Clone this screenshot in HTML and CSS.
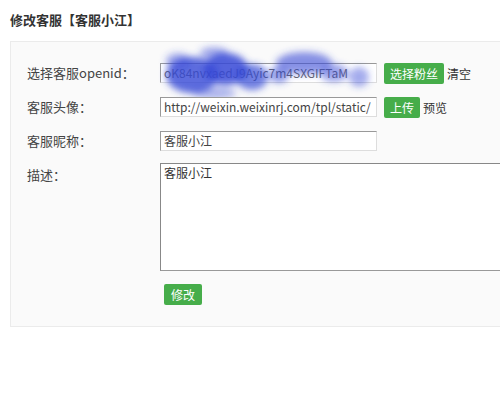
FILE: index.html
```html
<!DOCTYPE html>
<html lang="zh-CN">
<head>
    <meta charset="UTF-8">
    <title>修改客服</title>
    <link rel="stylesheet" href="styles.css">
</head>
<body>
    <h2 class="title">修改客服【客服小江】</h2>
    <div class="panel">
        <div class="row">
            <label class="lbl">选择客服openid：</label>
            <div class="field">
                <span class="inp inp-id">oK84nvxaedJ9Ayic7m4SXGIFTaM</span>
                <svg class="mask" width="230" height="64" viewBox="0 0 230 64">
                    <defs>
                        <filter id="bl" x="-30%" y="-60%" width="160%" height="220%">
                            <feGaussianBlur stdDeviation="3.5"/>
                        </filter>
                    </defs>
                    <g filter="url(#bl)" fill="#3548d6">
                        <ellipse cx="38" cy="34" rx="26" ry="18" opacity="0.8"/>
                        <ellipse cx="72" cy="28" rx="22" ry="16" opacity="0.85"/>
                        <ellipse cx="98" cy="36" rx="16" ry="13" opacity="0.7"/>
                        <ellipse cx="24" cy="20" rx="12" ry="8" opacity="0.45"/>
                        <ellipse cx="60" cy="12" rx="14" ry="6" opacity="0.45"/>
                        <ellipse cx="150" cy="22" rx="28" ry="11" opacity="0.6"/>
                        <ellipse cx="180" cy="32" rx="14" ry="9" opacity="0.5"/>
                        <ellipse cx="205" cy="36" rx="10" ry="10" opacity="0.45"/>
                        <ellipse cx="125" cy="34" rx="10" ry="8" opacity="0.55"/>
                        <ellipse cx="60" cy="52" rx="22" ry="6" opacity="0.4"/>
                    </g>
                </svg>
            </div>
            <a class="btn" href="#">选择粉丝</a>
            <a class="link" href="#">清空</a>
        </div>
        <div class="row">
            <label class="lbl">客服头像：</label>
            <div class="field">
                <span class="inp">http://weixin.weixinrj.com/tpl/static/</span>
            </div>
            <a class="btn" href="#">上传</a>
            <a class="link" href="#">预览</a>
        </div>
        <div class="row row-short">
            <label class="lbl">客服昵称：</label>
            <div class="field">
                <span class="inp">客服小江</span>
            </div>
        </div>
        <div class="row row-top">
            <label class="lbl">描述：</label>
            <div class="area">客服小江</div>
        </div>
        <div class="row row-btn">
            <a class="btn btn-submit" href="#">修改</a>
        </div>
    </div>
</body>
</html>
```

FILE: styles.css
```css
*{
    padding: 0;
    margin: 0;
    box-sizing: border-box;
}
body{
    width: 500px;
    overflow: hidden;
    background: #fff;
    color: #333;
    font-family: "Microsoft YaHei", "Noto Sans CJK SC", sans-serif;
    font-size: 13px;
}
.title{
    font-size: 13px;
    font-weight: bold;
    line-height: 20px;
    padding: 10px 10px 11px;
    color: #333;
}
.panel{
    margin-left: 10px;
    background: #fafafa;
    border: 1px solid #ebebeb;
    border-right: none;
    padding: 21px 0 21px 16px;
}
.row{
    display: flex;
    align-items: center;
    height: 20px;
    margin-bottom: 14px;
}
.row-short{
    margin-bottom: 12px;
}
.row-top{
    align-items: flex-start;
    height: auto;
    margin-bottom: 13px;
}
.row-btn{
    height: 21px;
    margin-bottom: 0;
    padding-left: 137px;
}
.lbl{
    flex: none;
    width: 133px;
    line-height: 20px;
    color: #444;
}
.row-top .lbl{
    padding-top: 2px;
}
.field{
    position: relative;
    flex: none;
    width: 217px;
    height: 20px;
}
.inp{
    display: block;
    width: 217px;
    height: 20px;
    line-height: 18px;
    padding: 0 3px;
    background: #fff;
    border: 1px solid #ddd;
    border-top-color: #999;
    border-left-color: #999;
    font-size: 12px;
    color: #444;
    white-space: nowrap;
    overflow: hidden;
}
.inp-id{
    color: #666;
}
.mask{
    position: absolute;
    left: -6px;
    top: -22px;
    pointer-events: none;
}
.btn{
    flex: none;
    display: inline-block;
    height: 21px;
    line-height: 21px;
    padding: 0 6px;
    margin-left: 7px;
    background: #46ad4a;
    color: #fff;
    font-size: 12px;
    border-radius: 2px;
    text-decoration: none;
}
.btn-submit{
    margin-left: 0;
    padding: 0 7px;
}
.link{
    margin-left: 3px;
    color: #333;
    font-size: 12px;
    text-decoration: none;
}
.area{
    flex: 1;
    height: 108px;
    background: #fff;
    border: 1px solid #ddd;
    border-top-color: #888;
    border-left-color: #888;
    border-bottom-color: #999;
    border-right: none;
    padding: 0 3px;
    font-size: 12px;
    line-height: 18px;
    color: #333;
}
```
